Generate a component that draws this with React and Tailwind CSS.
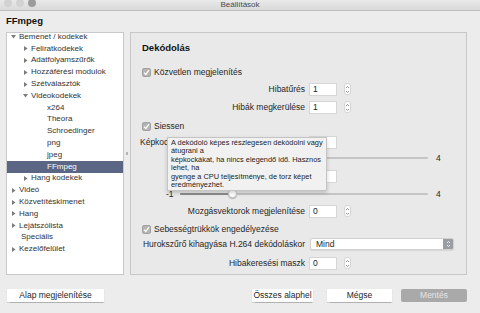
import React from "react";

const FONT = { fontFamily: '"Liberation Sans", Arial, sans-serif' };

const tree = [
  { label: "Bemenet / kodekek", level: 0, arrow: "down" },
  { label: "Feliratkodekek", level: 1, arrow: "right" },
  { label: "Adatfolyamszűrők", level: 1, arrow: "right" },
  { label: "Hozzáférési modulok", level: 1, arrow: "right" },
  { label: "Szétválasztók", level: 1, arrow: "right" },
  { label: "Videokodekek", level: 1, arrow: "down" },
  { label: "x264", level: 2 },
  { label: "Theora", level: 2 },
  { label: "Schroedinger", level: 2 },
  { label: "png", level: 2 },
  { label: "jpeg", level: 2 },
  { label: "FFmpeg", level: 2, selected: true },
  { label: "Hang kodekek", level: 1, arrow: "right" },
  { label: "Videó", level: 0, arrow: "right" },
  { label: "Közvetítéskimenet", level: 0, arrow: "right" },
  { label: "Hang", level: 0, arrow: "right" },
  { label: "Lejátszólista", level: 0, arrow: "right" },
  { label: "Speciális", level: 0, pad: true },
  { label: "Kezelőfelület", level: 0, arrow: "right" },
];

const indent = ["pl-[3px]", "pl-[15px]", "pl-[31px]"];

const Arrow = ({ dir }) => (
  <svg width="7" height="7" viewBox="0 0 7 7" className="shrink-0">
    {dir === "down" ? (
      <path d="M1 2 L6 2 L3.5 5.5 Z" fill="#7b7b7b" />
    ) : (
      <path d="M2 1 L5.5 3.5 L2 6 Z" fill="#7b7b7b" />
    )}
  </svg>
);

const Check = () => (
  <div className="flex h-[9px] w-[9px] items-center justify-center rounded-[2px] border border-[#a2a2a2] bg-[#b4b4b4]">
    <svg width="7" height="7" viewBox="0 0 7 7">
      <path d="M1 3.6 L2.8 5.4 L6 1.2" stroke="#fff" strokeWidth="1.3" fill="none" />
    </svg>
  </div>
);

const Spinner = () => (
  <div className="ml-[7px] flex h-[12px] w-[7px] items-center justify-center rounded-[3px] border border-[#d4d4d4] bg-white">
    <svg width="5" height="9" viewBox="0 0 5 9">
      <path d="M1 3 L2.5 1.5 L4 3 M1 6 L2.5 7.5 L4 6" stroke="#777" strokeWidth="0.8" fill="none" />
    </svg>
  </div>
);

const NumInput = ({ value }) => (
  <div className="ml-[4px] flex h-[13px] w-[28px] items-center border border-[#d6d6d6] bg-white pl-[3px] text-[8.5px] text-[#222]">
    {value}
  </div>
);

const FieldRow = ({ label, value, mt }) => (
  <div className={`flex h-[14px] items-center pl-[10px] ${mt}`}>
    <div className="w-[164px] text-right">{label}</div>
    <NumInput value={value} />
    <Spinner />
  </div>
);

const CheckRow = ({ label, mt }) => (
  <div className={`flex h-[14px] items-center gap-[3px] pl-[11px] ${mt}`}>
    <Check />
    <span>{label}</span>
  </div>
);

const SliderRow = ({ mt, pos, hideMin }) => (
  <div className={`flex h-[14px] items-center pl-[35px] ${mt}`}>
    <span className="w-[8px]">{hideMin ? "" : "-1"}</span>
    <div className="relative ml-[6px] h-[2px] w-[248px] rounded bg-[#c4c4c4]">
      <div className="h-[2px] rounded bg-[#8e8e8e]" style={{ width: pos }} />
      <div
        className="absolute top-[-4px] h-[9px] w-[9px] rounded-full border border-[#c9c9c9] bg-white shadow-[0_1px_1px_rgba(0,0,0,0.25)]"
        style={{ left: pos - 4 }}
      />
    </div>
    <span className="ml-[8px]">4</span>
  </div>
);

const App = () => {
  return (
    <div
      style={FONT}
      className="relative h-[313px] w-[480px] overflow-hidden bg-[#ececec] text-[8.5px] text-[#262626]"
    >
      {/* title bar */}
      <div className="relative flex h-[11px] items-center justify-center border-b border-[#bdbdbd] bg-[linear-gradient(#e9e9e9,#d9d9d9)]">
        <div className="absolute left-[4px] top-[-1px] flex gap-[4px]">
          <div className="h-[8px] w-[8px] rounded-full bg-[#d2d2d2]" />
          <div className="h-[8px] w-[8px] rounded-full bg-[#d2d2d2]" />
          <div className="h-[8px] w-[8px] rounded-full bg-[#9c9c9c]" />
        </div>
        <span className="text-[8px] leading-none text-[#4a4a4a]">Beállítások</span>
      </div>

      {/* page header */}
      <div className="flex h-[21px] items-center pl-[6px] text-[9.5px] font-bold text-[#111]">
        FFmpeg
      </div>

      <div className="flex h-[243px] pl-[6px]">
        {/* tree */}
        <div className="w-[118px] overflow-hidden border border-[#c9c9c9] bg-white text-[8px] text-[#333]">
          <div className="-mt-[2px]">
            {tree.map((item) => (
              <div
                key={item.label}
                className={`flex h-[11.8px] items-center gap-[2px] ${indent[item.level]} ${
                  item.selected ? "bg-[#5a6683] text-white" : ""
                }`}
              >
                {item.arrow ? (
                  <Arrow dir={item.arrow} />
                ) : (
                  <span className={item.pad ? "w-[9px]" : "w-[7px]"} />
                )}
                <span className="leading-none">{item.label}</span>
              </div>
            ))}
          </div>
        </div>

        {/* splitter */}
        <div className="flex w-[6px] items-center justify-center">
          <div className="h-[3px] w-[2px] bg-[#b5b5b5]" />
        </div>

        {/* settings panel */}
        <div className="relative w-[337px] border border-[#c8c8c8] bg-[#e9e9e9] pt-[8px]">
          <div className="flex h-[14px] items-center pl-[11px] text-[9.5px] font-bold text-[#111]">
            Dekódolás
          </div>
          <CheckRow label="Közvetlen megjelenítés" mt="mt-[10px]" />
          <FieldRow label="Hibatűrés" value="1" mt="mt-[3px]" />
          <FieldRow label="Hibák megkerülése" value="1" mt="mt-[4px]" />
          <CheckRow label="Siessen" mt="mt-[5px]" />
          <div className="mt-[2px] flex h-[14px] items-center pl-[9px]">
            <div className="w-[165px] whitespace-nowrap">Képkockák kihagyása</div>
            <NumInput value="" />
          </div>
          <SliderRow mt="mt-[2px]" pos={52} hideMin />
          <div className="mt-[4px] flex h-[14px] items-center pl-[10px]">
            <div className="w-[164px]" />
            <NumInput value="" />
          </div>
          <SliderRow mt="mt-[4px]" pos={52} />
          <FieldRow label="Mozgásvektorok megjelenítése" value="0" mt="mt-[3px]" />
          <CheckRow label="Sebességtrükkök engedélyezése" mt="mt-[4px]" />
          <div className="mt-[1px] flex h-[14px] items-center pl-[10px]">
            <div className="w-[164px] whitespace-nowrap text-right">
              Hurokszűrő kihagyása H.264 dekódoláskor
            </div>
            <div className="ml-[5px] flex h-[12px] w-[144px] items-center overflow-hidden rounded-[2px] border border-[#d0d0d0] bg-white shadow-[0_1px_1px_rgba(0,0,0,0.08)]">
              <span className="flex-1 pl-[5px]">Mind</span>
              <div className="flex h-full w-[10px] items-center justify-center bg-[#9a9da4]">
                <svg width="5" height="8" viewBox="0 0 5 8">
                  <path d="M1 3 L2.5 1.5 L4 3 M1 5 L2.5 6.5 L4 5" stroke="#fff" strokeWidth="0.8" fill="none" />
                </svg>
              </div>
            </div>
          </div>
          <FieldRow label="Hibakeresési maszk" value="0" mt="mt-[5px]" />

          {/* tooltip */}
          <div className="absolute left-[36px] top-[104px] w-[160px] border border-[#c4c4c4] bg-[#f1f1f1] pl-[3px] pt-[1px] text-[7.4px] leading-[8.4px] text-[#1c1c1c] shadow-[0_2px_4px_rgba(0,0,0,0.18)]">
            <div>A dekódoló képes részlegesen dekódolni vagy</div>
            <div>átugrani a</div>
            <div>képkockákat, ha nincs elegendő idő. Hasznos</div>
            <div>lehet, ha</div>
            <div>gyenge a CPU teljesítménye, de torz képet</div>
            <div className="pb-[1px]">eredményezhet.</div>
          </div>
        </div>
      </div>

      {/* buttons */}
      <div className="mt-[14px] flex h-[13px] items-center pl-[7px] pr-[13px] text-[8.5px]">
        <div className="flex h-[13px] w-[97px] items-center justify-center bg-white shadow-[0_0.5px_1px_rgba(0,0,0,0.25)]">
          Alap megjelenítése
        </div>
        <div className="flex-1" />
        <div className="flex h-[13px] w-[61px] items-center justify-center bg-white shadow-[0_0.5px_1px_rgba(0,0,0,0.25)]">
          Összes alaphel
        </div>
        <div className="ml-[14px] flex h-[13px] w-[65px] items-center justify-center bg-white shadow-[0_0.5px_1px_rgba(0,0,0,0.25)]">
          Mégse
        </div>
        <div className="ml-[9px] flex h-[13px] w-[66px] items-center justify-center rounded-[2px] bg-[#a9a9a9] text-[#e4e4e4]">
          Mentés
        </div>
      </div>
    </div>
  );
};

export default App;
